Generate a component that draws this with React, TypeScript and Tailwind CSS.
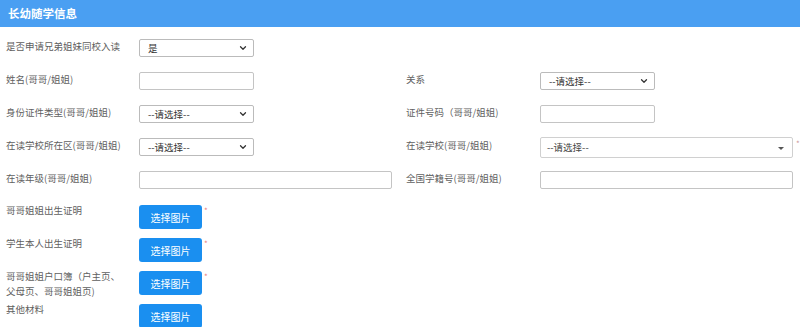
import { ChevronDown } from 'lucide-react'
import type { ReactNode } from 'react'

const fontStack = "font-['Microsoft_YaHei','Noto_Sans_CJK_SC',sans-serif]"

export default function App() {
  return (
    <div className={`h-[327px] w-[800px] overflow-hidden bg-white text-[9.5px] text-[#5f5f5f] ${fontStack}`}>
      <div className="flex h-[27px] items-center bg-[#4a9ff2] pl-[8px] text-[11.5px] font-bold text-white">
        长幼随学信息
      </div>

      <div className="pt-[4px] pl-[6px]">
        <Row left="是否申请兄弟姐妹同校入读" leftControl={<SelectBox value="是" />} />
        <Row
          left="姓名(哥哥/姐姐)"
          leftControl={<InputBox />}
          right="关系"
          rightControl={<SelectBox value="--请选择--" />}
        />
        <Row
          left="身份证件类型(哥哥/姐姐)"
          leftControl={<SelectBox value="--请选择--" />}
          right="证件号码（哥哥/姐姐)"
          rightControl={<InputBox />}
        />
        <Row
          left="在读学校所在区(哥哥/姐姐)"
          leftControl={<SelectBox value="--请选择--" />}
          right="在读学校(哥哥/姐姐)"
          rightControl={
            <div className="-mt-[1px] flex items-start">
              <div className="flex h-[21px] w-[253px] items-center justify-between rounded-[2px] border border-[#d0d0d0] pl-[6px] pr-[8px] text-[#444]">
                <span>--请选择--</span>
                <span className="mt-[1px] h-0 w-0 border-x-[3px] border-t-[3px] border-x-transparent border-t-[#555]" />
              </div>
              <span className="ml-[3px] mt-[2px] text-[8px] leading-[10px] text-[#c99]">*</span>
            </div>
          }
        />
        <Row
          left="在读年级(哥哥/姐姐)"
          leftControl={<InputBox wide />}
          right="全国学籍号(哥哥/姐姐)"
          rightControl={<InputBox wide />}
          tall
        />

        <UploadRow label="哥哥姐姐出生证明" required />
        <UploadRow label="学生本人出生证明" required />
        <UploadRow
          label={
            <>
              哥哥姐姐户口簿（户主页、
              <br />
              父母页、哥哥姐姐页)
            </>
          }
          required
        />
        <UploadRow label="其他材料" />
      </div>
    </div>
  )
}

type RowProps = {
  left: string
  leftControl: ReactNode
  right?: string
  rightControl?: ReactNode
  tall?: boolean
}

function Row({ left, leftControl, right, rightControl, tall = false }: RowProps) {
  return (
    <div className={`flex items-start pt-[8px] ${tall ? 'h-[34px]' : 'h-[33px]'}`}>
      <div className="w-[133px] pt-[1px] leading-[12px]">{left}</div>
      <div className="w-[267px]">{leftControl}</div>
      {right ? <div className="w-[134px] pt-[1px] leading-[12px]">{right}</div> : null}
      {rightControl ? <div className="flex-1">{rightControl}</div> : null}
    </div>
  )
}

function SelectBox({ value }: { value: string }) {
  return (
    <div className="flex h-[18px] w-[115px] items-center justify-between rounded-[2px] border border-[#bbb] pl-[8px] pr-[5px] text-[#333]">
      <span>{value}</span>
      <ChevronDown aria-hidden="true" className="size-[10px] text-[#333]" strokeWidth={3} />
    </div>
  )
}

function InputBox({ wide = false }: { wide?: boolean }) {
  return (
    <div
      className={`h-[18px] rounded-[2px] border border-[#c4c4c4] ${wide ? 'w-[253px]' : 'w-[115px]'}`}
    />
  )
}

function UploadRow({ label, required = false }: { label: ReactNode; required?: boolean }) {
  return (
    <div className="flex h-[33px] items-start pt-[8px]">
      <div className="-mt-[2px] w-[133px] leading-[15px]">{label}</div>
      <button
        className="flex h-[24px] w-[63px] items-center justify-center rounded-[3px] bg-[#1a8ff0] text-[10px] text-white"
        type="button"
      >
        选择图片
      </button>
      {required ? <span className="ml-[2px] mt-[1px] text-[8px] leading-[10px] text-[#e87c7c]">*</span> : null}
    </div>
  )
}
